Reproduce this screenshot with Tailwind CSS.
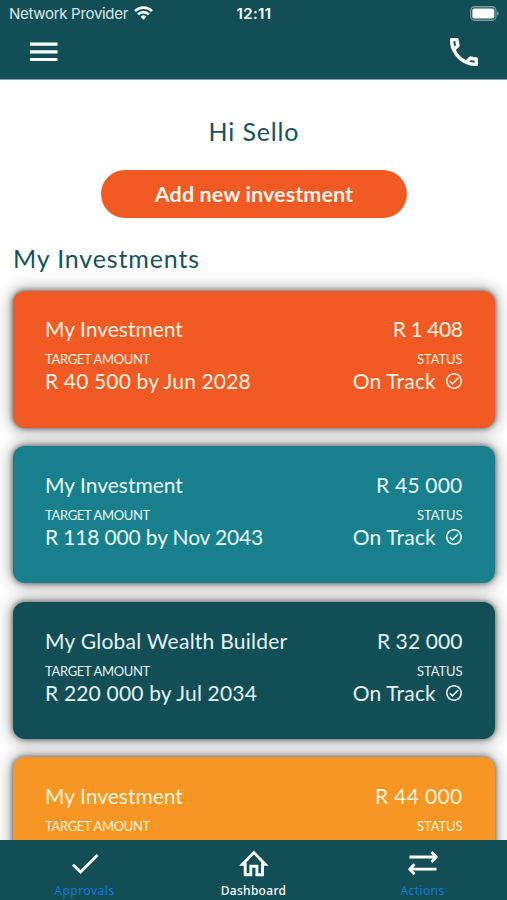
<!DOCTYPE html>
<html lang="en">
<head>
<meta charset="utf-8">
<title>My Investments</title>
<script src="https://cdn.jsdelivr.net/npm/@tailwindcss/browser@4"></script>
</head>
<body class="bg-white">
<div class="w-[507px] h-[900px] flex flex-col overflow-hidden bg-white font-[Lato,sans-serif] whitespace-nowrap">

  <header class="h-[80px] shrink-0 bg-[#124e56] border-b border-[#7fa5ad] text-white">
    <div class="h-7 grid grid-cols-3 items-center pl-[9px] pr-[8px] font-[Inter,sans-serif] text-[15px] leading-5">
      <div class="flex items-center gap-[6px]">
        <span class="text-[#dce8ea] tracking-[-0.3px]">Network Provider</span>
        <svg class="w-[19px] h-[14px] -mt-[2px]" viewBox="0 0 19 14" fill="none" stroke="#fff" stroke-width="2.7"><path d="M1 5.1a12 12 0 0 1 17 0"/><path d="M4.1 8.4a7.6 7.6 0 0 1 10.8 0"/><path d="M6.6 10.8a4.1 4.1 0 0 1 5.8 0L9.500 13.700z" fill="#fff" stroke="none"/></svg>
      </div>
      <span class="text-center font-semibold tracking-[0.4px]">12:11</span>
      <svg class="w-[29px] h-[15px] justify-self-end -mt-[2px]" viewBox="0 0 31 15" preserveAspectRatio="none"><rect x=".75" y=".75" width="27" height="13.500" rx="4" fill="none" stroke="#7d9ea3" stroke-width="1.300"/><rect x="2.500" y="2.500" width="23.500" height="10" rx="2" fill="#fff"/><path d="M29 5.500q1.700.5 1.700 2t-1.700 2z" fill="#7d9ea3"/></svg>
    </div>
    <div class="h-12 flex items-center justify-between pl-[30px] pr-[29px]">
      <svg class="w-7 h-5" viewBox="0 0 28 20" fill="#fff"><path d="M0 .5h27.500v3.200H0zM0 8.200h27.500v3.200H0zM0 15.900h27.500v3.200H0z"/></svg>
      <svg class="w-[28px] h-[28px]" viewBox="3 3 18 18" fill="#fff" stroke="#fff" stroke-width=".25"><path d="M6.540 5c.06.89.21 1.760.45 2.590l-1.200 1.200c-.41-1.200-.67-2.470-.76-3.790h1.510m9.860 12.020c.85.240 1.720.39 2.600.45v1.490c-1.320-.09-2.590-.35-3.800-.75l1.200-1.190M7.500 3H4c-.55 0-1 .45-1 1 0 9.390 7.610 17 17 17 .55 0 1-.45 1-1v-3.490c0-.55-.45-1-1-1-1.240 0-2.450-.2-3.570-.57-.1-.04-.21-.05-.31-.05-.26 0-.51.1-.71.290l-2.200 2.200c-2.830-1.450-5.150-3.760-6.590-6.590l2.200-2.200c.28-.28.36-.67.25-1.020C8.700 6.450 8.500 5.250 8.500 4c0-.55-.45-1-1-1z"/></svg>
    </div>
  </header>

  <main class="h-[760px] shrink-0 overflow-hidden pl-[13px] pt-[35px] pr-[12px]">
    <h1 class="text-center text-[25px] leading-8 tracking-[0.85px] text-[#17525a]">Hi Sello</h1>
    <button class="mt-[23px] mx-auto w-[306px] h-12 flex items-center justify-center rounded-full bg-[#f15a22] text-[21.500px] font-bold tracking-[0.1px] text-[#fff4ea]">Add new investment</button>
    <h2 class="mt-[24px] text-[25px] leading-8 tracking-[0.85px] text-[#17525a]">My Investments</h2>

    <div class="mt-[16.600px] flex flex-col gap-[18.600px]">
      <section class="h-[137px] rounded-[12px] bg-[#f15a22] shadow-[0_0_5px_1px_rgba(0,0,0,0.45),0_0_16px_3px_rgba(0,0,0,0.3)] text-[#fff1e4] pl-8 pr-[32.500px] pt-[25.500px]">
        <div class="flex justify-between text-[21px] leading-[26px]"><span>My Investment</span><span class="tracking-[-0.4px]">R 1 408</span></div>
        <div class="flex justify-between text-[13px] leading-4 mt-[9px]"><span class="tracking-[-0.33px]">TARGET AMOUNT</span><span class="tracking-[-0.1px]">STATUS</span></div>
        <div class="flex justify-between text-[21px] leading-[26px] mt-px"><span class="tracking-[0.15px]">R 40 500 by Jun 2028</span><span class="flex items-center gap-[10px] tracking-[0.2px]">On Track<svg class="w-[16px] h-[16px] mr-[0.500px]" viewBox="2 2 20 20" fill="currentColor"><path d="M12 2C6.480 2 2 6.480 2 12s4.480 10 10 10 10-4.480 10-10S17.520 2 12 2zm0 18c-4.410 0-8-3.590-8-8s3.590-8 8-8 8 3.590 8 8-3.590 8-8 8zm4.590-12.420L10 14.170l-2.590-2.580L6 13l4 4 8-8z"/></svg></span></div>
      </section>
      <section class="h-[137px] rounded-[12px] bg-[#17808c] shadow-[0_0_5px_1px_rgba(0,0,0,0.45),0_0_16px_3px_rgba(0,0,0,0.3)] text-[#e8fbfd] pl-8 pr-[32.500px] pt-[26px]">
        <div class="flex justify-between text-[21px] leading-[26px]"><span>My Investment</span><span class="tracking-[0.2px]">R 45 000</span></div>
        <div class="flex justify-between text-[13px] leading-4 mt-[9px]"><span class="tracking-[-0.33px]">TARGET AMOUNT</span><span class="tracking-[-0.1px]">STATUS</span></div>
        <div class="flex justify-between text-[21px] leading-[26px] mt-px"><span class="tracking-[-0.15px]">R 118 000 by Nov 2043</span><span class="flex items-center gap-[10px] tracking-[0.2px]">On Track<svg class="w-[16px] h-[16px] mr-[0.500px]" viewBox="2 2 20 20" fill="currentColor"><path d="M12 2C6.480 2 2 6.480 2 12s4.480 10 10 10 10-4.480 10-10S17.520 2 12 2zm0 18c-4.410 0-8-3.590-8-8s3.590-8 8-8 8 3.590 8 8-3.590 8-8 8zm4.590-12.420L10 14.170l-2.590-2.580L6 13l4 4 8-8z"/></svg></span></div>
      </section>
      <section class="h-[137px] rounded-[12px] bg-[#124e56] shadow-[0_0_5px_1px_rgba(0,0,0,0.45),0_0_16px_3px_rgba(0,0,0,0.3)] text-[#e4f6f9] pl-8 pr-[32.500px] pt-[26px]">
        <div class="flex justify-between text-[21px] leading-[26px]"><span class="tracking-[0.25px]">My Global Wealth Builder</span><span class="tracking-[0.1px]">R 32 000</span></div>
        <div class="flex justify-between text-[13px] leading-4 mt-[9px]"><span class="tracking-[-0.33px]">TARGET AMOUNT</span><span class="tracking-[-0.1px]">STATUS</span></div>
        <div class="flex justify-between text-[21px] leading-[26px] mt-px"><span class="tracking-[0.18px]">R 220 000 by Jul 2034</span><span class="flex items-center gap-[10px] tracking-[0.2px]">On Track<svg class="w-[16px] h-[16px] mr-[0.500px]" viewBox="2 2 20 20" fill="currentColor"><path d="M12 2C6.480 2 2 6.480 2 12s4.480 10 10 10 10-4.480 10-10S17.520 2 12 2zm0 18c-4.410 0-8-3.590-8-8s3.590-8 8-8 8 3.590 8 8-3.590 8-8 8zm4.590-12.420L10 14.170l-2.590-2.580L6 13l4 4 8-8z"/></svg></span></div>
      </section>
      <section class="h-[137px] rounded-[12px] bg-[#f79622] shadow-[0_0_5px_1px_rgba(0,0,0,0.45),0_0_16px_3px_rgba(0,0,0,0.3)] text-[#fff3dc] pl-8 pr-[32.500px] pt-[26px]">
        <div class="flex justify-between text-[21px] leading-[26px]"><span>My Investment</span><span class="tracking-[0.35px]">R 44 000</span></div>
        <div class="flex justify-between text-[13px] leading-4 mt-[9px]"><span class="tracking-[-0.33px]">TARGET AMOUNT</span><span class="tracking-[-0.1px]">STATUS</span></div>
      </section>
    </div>
  </main>

  <nav class="h-[60px] shrink-0 grid grid-cols-3 bg-[#124e56] font-['Noto_Sans',sans-serif] text-[12px] leading-4">
    <a class="flex flex-col items-center pt-[9px] text-[#0f78d8]">
      <svg class="w-[28px] h-[30px]" viewBox="0 0 28 30" fill="none" stroke="#fff" stroke-width="2.800"><path d="M2 15.800 9.500 23 26.500 6"/></svg>
      <span class="mt-[4px] tracking-[0.52px]">Approvals</span>
    </a>
    <a class="flex flex-col items-center pt-[9px] text-white font-medium">
      <svg class="w-[30px] h-[30px]" viewBox="0 0 30 30" fill="none" stroke="#fff" stroke-width="2.900"><path d="M3.500 15.200H6.200V25.800H11.800V17.300H17.900V25.800H23.500V15.200H26.200L14.850 3.600z"/></svg>
      <span class="mt-[4px] tracking-[0.3px]">Dashboard</span>
    </a>
    <a class="flex flex-col items-center pt-[9px] text-[#0f78d8]">
      <svg class="w-[30px] h-[30px]" viewBox="0 0 30 30" fill="none" stroke="#fff" stroke-width="2.800" stroke-linejoin="round"><path d="M1.500 8H28M23.500 3 28.300 8 23.500 13M28.500 20.200H2M6.500 15.200 1.700 20.200 6.500 25.200"/></svg>
      <span class="mt-[4px] tracking-[0.4px]">Actions</span>
    </a>
  </nav>
</div>
</body>
</html>
